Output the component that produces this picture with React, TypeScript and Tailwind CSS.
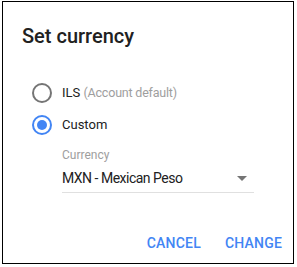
import { useState } from "react";

function Radio({ checked }: { checked: boolean }) {
  return (
    <span
      className={`flex h-5 w-5 items-center justify-center rounded-full border-2 ${
        checked ? "border-[#4285f4]" : "border-[#757575]"
      }`}
    >
      {checked && <span className="h-[10px] w-[10px] rounded-full bg-[#4285f4]" />}
    </span>
  );
}

export default function App() {
  const [choice, setChoice] = useState("custom");

  return (
    <div className="h-[267px] w-[297px] bg-white pl-[2px] pt-[1px] font-['Roboto',sans-serif]">
      <div className="flex h-[263px] w-[292px] flex-col border border-black pt-[20px] pl-[19px]">
        <h1 className="text-[20px] leading-[28px] font-medium text-[#212121]">Set currency</h1>

        {/* Options */}
        <div className="mt-[27px] flex flex-col">
          <button
            className="flex h-8 items-center gap-[10px] pl-[10px] text-left"
            onClick={() => setChoice("ils")}
          >
            <Radio checked={choice === "ils"} />
            <span className="text-[13px] text-[#212121]">
              ILS <span className="text-[12.5px] tracking-[-0.2px] text-[#9e9e9e]">(Account default)</span>
            </span>
          </button>
          <button
            className="flex h-8 items-center gap-[10px] pl-[10px] text-left"
            onClick={() => setChoice("custom")}
          >
            <Radio checked={choice === "custom"} />
            <span className="text-[13px] text-[#212121]">Custom</span>
          </button>
        </div>

        {/* Currency select */}
        <div className="ml-[40px] mt-[6px] w-[192px]">
          <div className="text-[12px] leading-4 text-[#9e9e9e]">Currency</div>
          <div className="mt-[3px] flex items-center justify-between border-b border-[#e0e0e0] pb-[2px] pr-[7px]">
            <span className="text-[14px] leading-6 tracking-[-0.5px] text-[#212121]">MXN - Mexican Peso</span>
            <span className="h-0 w-0 border-x-[5px] border-t-[5px] border-x-transparent border-t-[#757575]" />
          </div>
        </div>

        {/* Actions */}
        <div className="mt-[40px] flex justify-end gap-[24px] pr-[11px] text-[14px] leading-5 font-medium tracking-[0.2px] text-[#4285f4]">
          <button>CANCEL</button>
          <button>CHANGE</button>
        </div>
      </div>
    </div>
  );
}
